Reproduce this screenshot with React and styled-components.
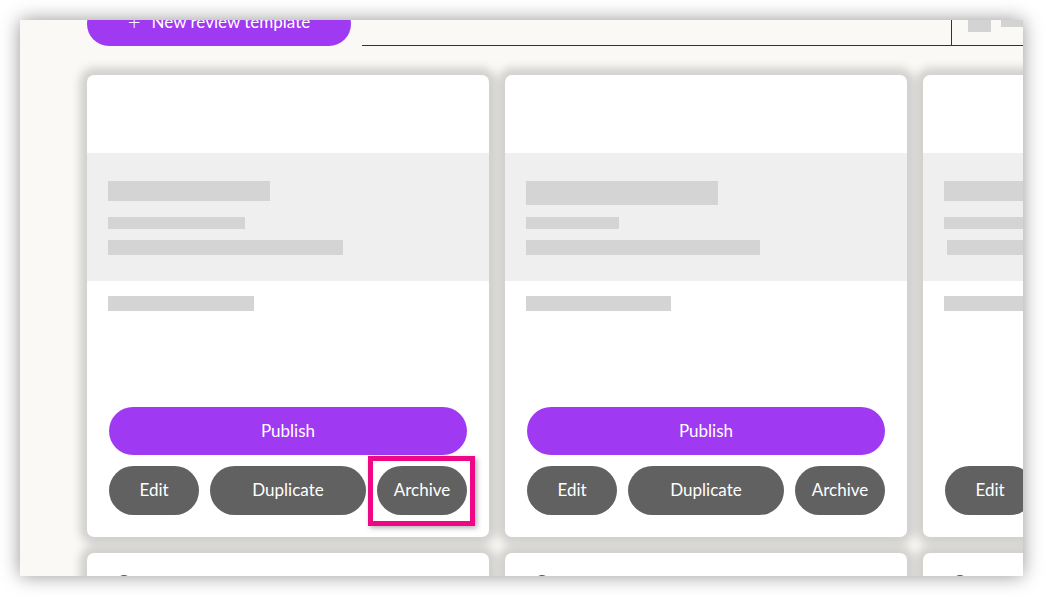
import React from 'react'
import styled, { createGlobalStyle } from 'styled-components'

const Global = createGlobalStyle`
  html, body { margin: 0; padding: 0; background: #ffffff; }
  body { font-family: Lato, "Open Sans", sans-serif; }
`

const Frame = styled.div`
  margin: 20px;
  width: 1003px;
  height: 556px;
  overflow: hidden;
  background: #faf9f6;
  box-shadow: 0 0 18px rgba(0, 0, 0, 0.42);
`

const Inner = styled.div`
  margin-top: -18px;
  padding-left: 67px;
`

const Header = styled.div`
  display: flex;
  align-items: flex-end;
  gap: 11px;
  height: 44px;
`

const NewButton = styled.button`
  flex: none;
  width: 264px;
  height: 44px;
  border: none;
  border-radius: 22px;
  background: #a03af2;
  color: #fff;
  font-family: Lato, sans-serif;
  font-size: 17px;
  display: flex;
  align-items: center;
  justify-content: center;
  gap: 11px;
  padding: 0 0 5px;
`

const Plus = styled.span`
  font-size: 22px;
  font-weight: 300;
  line-height: 1;
`

const Toolbar = styled.div`
  flex: none;
  width: 700px;
  height: 44px;
  display: flex;
  border-bottom: 1px solid #333;
`

const Search = styled.div`
  width: 589px;
  border-right: 1px solid #333;
`

const Toggles = styled.div`
  display: flex;
  gap: 10px;
  padding-left: 16px;
`

const Skel = styled.div`
  width: ${p => p.w}px;
  height: ${p => p.h}px;
  background: #d3d3d3;
  flex: none;
`

const Grid = styled.div`
  display: grid;
  grid-template-columns: repeat(3, 402px);
  grid-auto-rows: 462px;
  gap: 16px;
  margin-top: 29px;
`

const Card = styled.div`
  position: relative;
  background: #fff;
  border-radius: 7px;
  box-shadow: 0 0 10px 7px rgba(0, 0, 0, 0.17);
  display: flex;
  flex-direction: column;
`

const Top = styled.div`
  height: 78px;
  flex: none;
`

const Band = styled.div`
  height: 128px;
  flex: none;
  background: #efefef;
  padding: 28px 0 0 21px;
  box-sizing: border-box;
  display: flex;
  flex-direction: column;
  align-items: flex-start;
`

const Bar = styled.div`
  width: ${p => p.w}px;
  height: ${p => p.h}px;
  margin-top: ${p => p.mt || 0}px;
  margin-left: ${p => p.ml || 0}px;
  background: #d4d4d4;
  flex: none;
`

const Body = styled.div`
  padding: 15px 0 0 21px;
`

const Actions = styled.div`
  margin-top: auto;
  padding: 0 22px 22px;
  display: flex;
  flex-direction: column;
  gap: 11px;
`

const Row = styled.div`
  display: flex;
  gap: 11px;
`

const Pill = styled.button`
  height: ${p => (p.primary ? 48 : 49)}px;
  width: ${p => (p.w ? p.w + 'px' : '100%')};
  flex: none;
  border: none;
  border-radius: 25px;
  background: ${p => (p.primary ? '#a03af2' : '#616161')};
  color: #fff;
  font-family: Lato, sans-serif;
  font-size: 17px;
  padding: 0 0 2px;
`

const Highlight = styled.div`
  position: absolute;
  left: 281px;
  top: 381px;
  width: 107px;
  height: 70px;
  box-sizing: border-box;
  border: 5px solid #ee0886;
  box-shadow: 2px 2px 5px rgba(0, 0, 0, 0.3);
  pointer-events: none;
`

const Avatar = styled.div`
  margin: 22px 0 0 30px;
  width: 14px;
  height: 14px;
  border-radius: 50%;
  border: 2px solid #555;
  box-sizing: border-box;
`

const cards = [
  { b1: [162, 20], b2: 137, b3: 235, b3ml: 0, b4: 146, publish: true },
  { b1: [192, 24], b2: 93, b3: 234, b3ml: 0, b4: 145, publish: true },
  { b1: [190, 20], b2: 140, b3: 230, b3ml: 3, b4: 146, publish: false },
]

export default function App() {
  return (
    <>
      <Global />
      <Frame>
        <Inner>
          <Header>
            <NewButton>
              <Plus>+</Plus>
              New review template
            </NewButton>
            <Toolbar>
              <Search />
              <Toggles>
                <Skel w={23} h={31} />
                <Skel w={23} h={26} />
              </Toggles>
            </Toolbar>
          </Header>
          <Grid>
            {cards.map((c, i) => (
              <Card key={i}>
                <Top />
                <Band>
                  <Bar w={c.b1[0]} h={c.b1[1]} />
                  <Bar w={c.b2} h={12} mt={36 - c.b1[1]} />
                  <Bar w={c.b3} h={15} mt={11} ml={c.b3ml} />
                </Band>
                <Body>
                  <Bar w={c.b4} h={15} />
                </Body>
                <Actions>
                  {c.publish && <Pill primary>Publish</Pill>}
                  <Row>
                    <Pill w={90}>Edit</Pill>
                    <Pill w={156}>Duplicate</Pill>
                    <Pill w={90}>Archive</Pill>
                  </Row>
                </Actions>
                {i === 0 && <Highlight />}
              </Card>
            ))}
            {cards.map((c, i) => (
              <Card key={'b' + i}>
                <Avatar />
              </Card>
            ))}
          </Grid>
        </Inner>
      </Frame>
    </>
  )
}
